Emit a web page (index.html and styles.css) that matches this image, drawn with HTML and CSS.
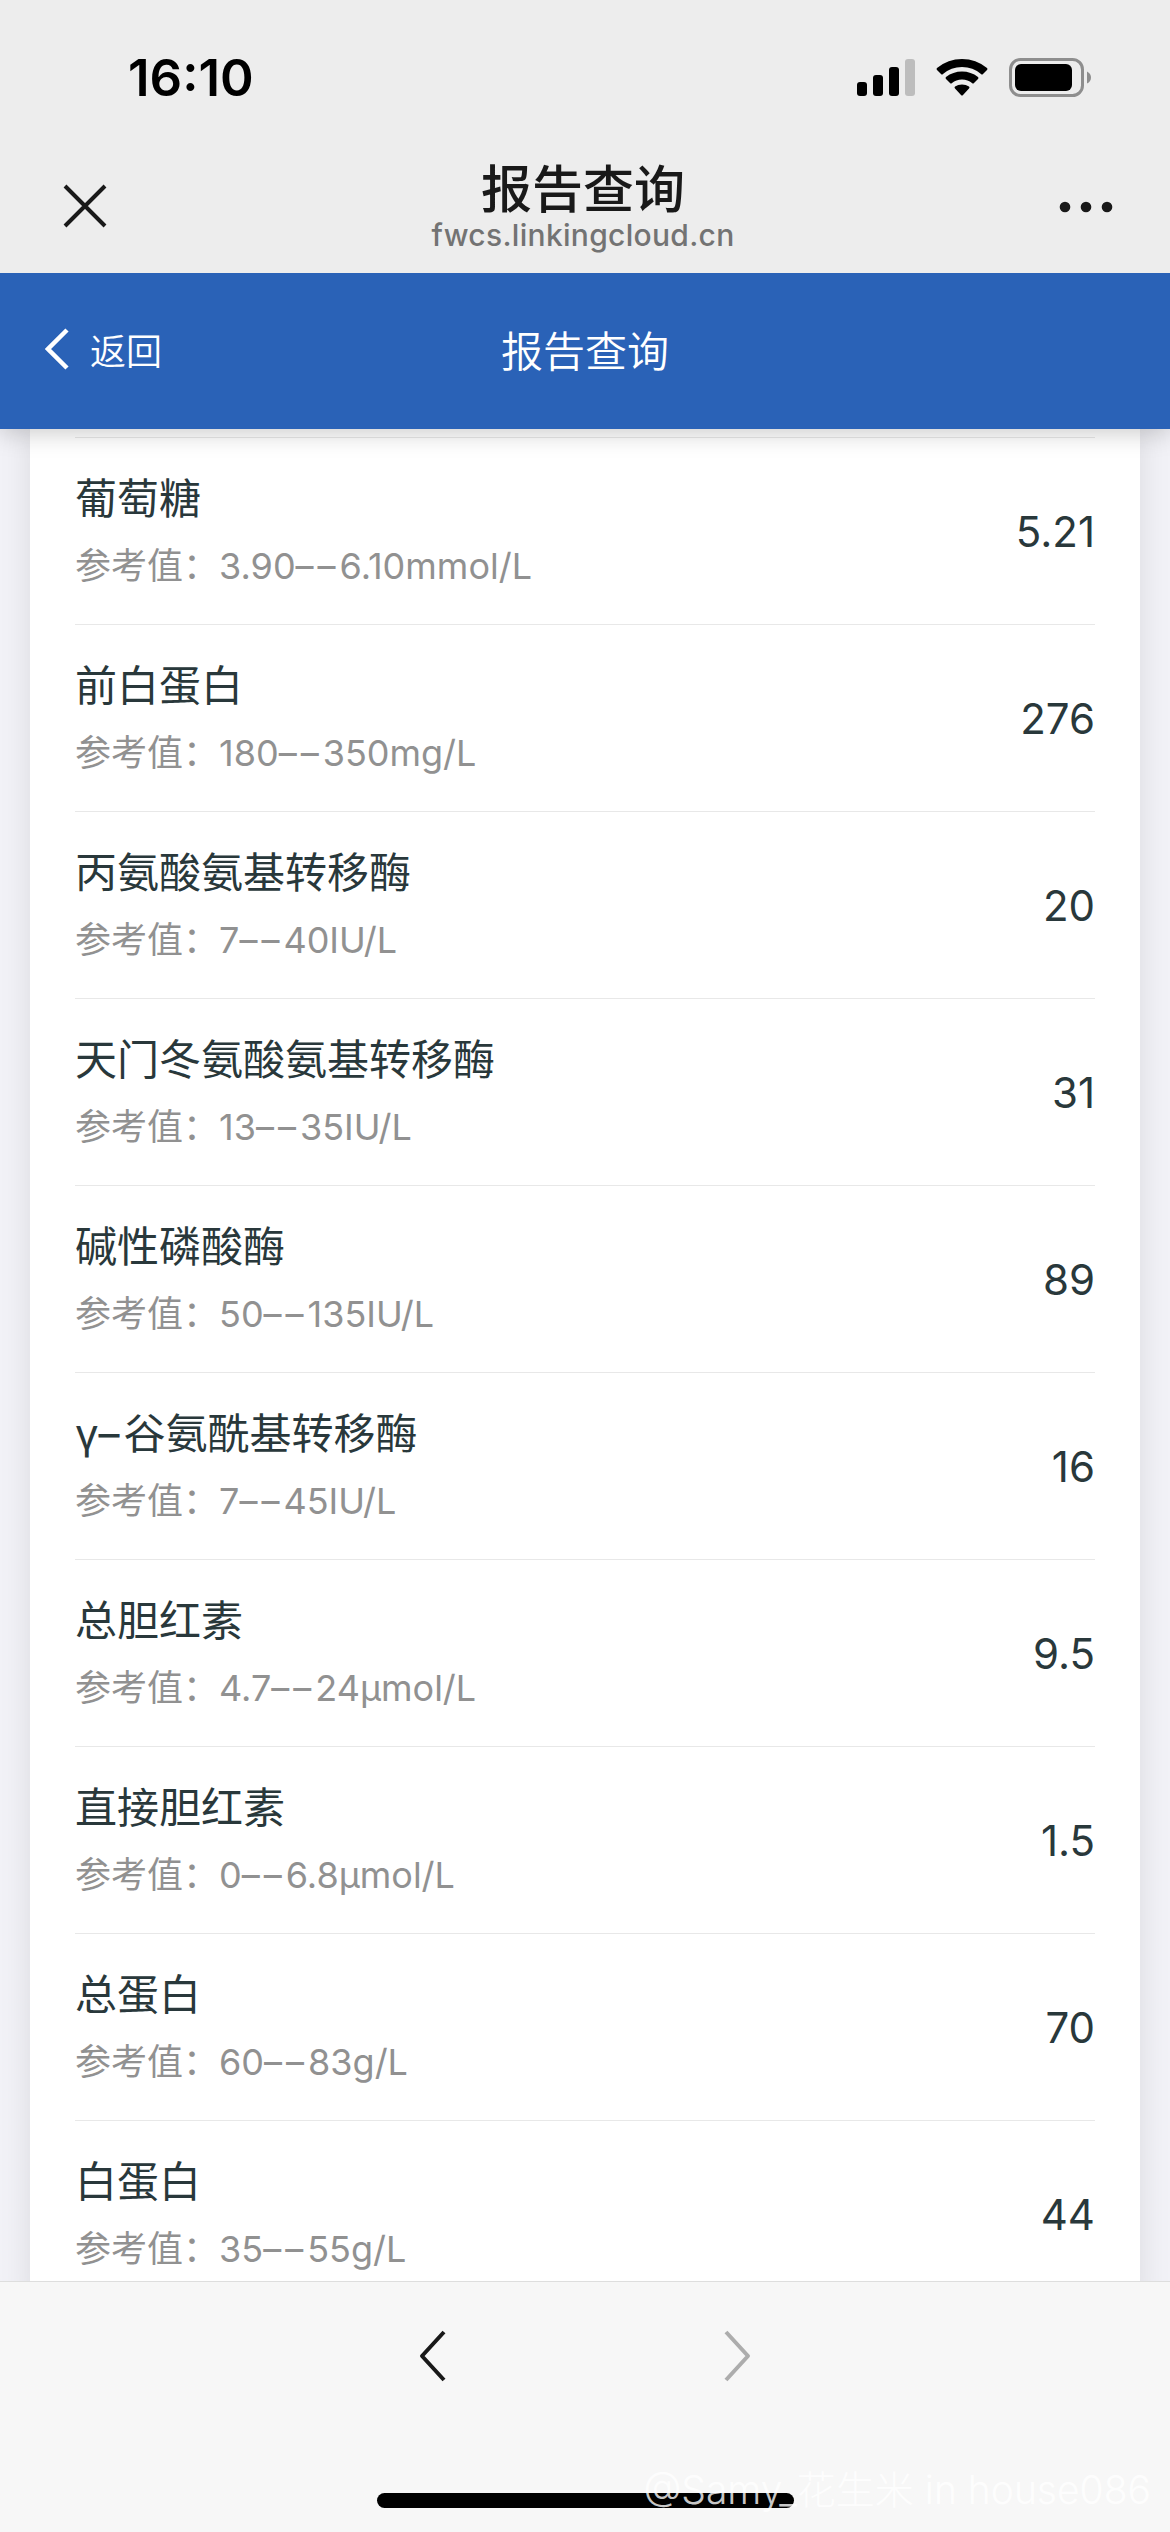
FILE: index.html
```html
<!DOCTYPE html>
<html lang="zh-CN">
<head>
    <meta charset="UTF-8">
    <meta name="viewport" content="width=device-width, initial-scale=1.0">
    <title>报告查询</title>
    <link rel="stylesheet" href="styles.css">
</head>
<body>
    <div class="status-bar">
        <div class="time">16:10</div>
        <div class="status-icons">
            <svg class="signal" width="60" height="42" viewBox="0 0 60 42">
                <rect x="1" y="25" width="10" height="14" rx="3"/>
                <rect x="17" y="18" width="10" height="21" rx="3"/>
                <rect x="33" y="10" width="10" height="29" rx="3"/>
                <rect x="49" y="2" width="10" height="37" rx="3" fill="#bdbdbd"/>
            </svg>
            <svg class="wifi" width="52" height="42" viewBox="0 0 52 42">
                <path d="M1 13 Q0 12 1 11 Q12 2 26 2 Q40 2 51 11 Q52 12 51 13 L47 17 Q46 18 45 17 Q37 10 26 10 Q15 10 7 17 Q6 18 5 17Z"/>
                <path d="M10 22 Q9 21 10 20 Q17 14.500 26 14.500 Q35 14.500 42 20 Q43 21 42 22 L38 26 Q37 27 36 26 Q32 22.500 26 22.500 Q20 22.500 16 26 Q15 27 14 26Z"/>
                <path d="M19 31.500 Q18 30.500 19 29.500 Q22 27.500 26 27.500 Q30 27.500 33 29.500 Q34 30.500 33 31.500 L27 38 Q26 39 25 38Z"/>
            </svg>
            <svg class="battery" width="84" height="42" viewBox="0 0 84 42">
                <rect x="2.500" y="2.500" width="72" height="36" rx="10" fill="none" stroke="#8e8e8e" stroke-width="3"/>
                <rect x="7" y="7" width="57" height="27" rx="6"/>
                <path d="M79 14.500 Q83 16.500 83 20.500 Q83 24.500 79 26.500Z" fill="#8e8e8e"/>
            </svg>
        </div>
    </div>

    <div class="browser-bar">
        <svg class="close" width="44" height="46" viewBox="0 0 44 46">
            <path d="M2 2 L42 42 M42 2 L2 42" fill="none" stroke="#191919" stroke-width="4"/>
        </svg>
        <div class="page-info">
            <div class="page-title">报告查询</div>
            <div class="page-url">fwcs.linkingcloud.cn</div>
        </div>
        <svg class="more" width="54" height="12" viewBox="0 0 54 12">
            <circle cx="6" cy="6" r="5.300"/>
            <circle cx="27" cy="6" r="5.300"/>
            <circle cx="48" cy="6" r="5.300"/>
        </svg>
    </div>

    <div class="header">
        <div class="back">
            <svg width="24" height="42" viewBox="0 0 24 42">
                <path d="M22 2 L3 21 L22 40" fill="none" stroke="#fff" stroke-width="4.500"/>
            </svg>
            <span>返回</span>
        </div>
        <div class="header-title">报告查询</div>
    </div>

    <div class="content">
        <div class="card">
            <div class="item">
                <div>
                    <div class="name">葡萄糖</div>
                    <div class="range">参考值：3.90<span class="dash">––</span>6.10mmol/L</div>
                </div>
                <div class="value">5.21</div>
            </div>
            <div class="item">
                <div>
                    <div class="name">前白蛋白</div>
                    <div class="range">参考值：180<span class="dash">––</span>350mg/L</div>
                </div>
                <div class="value">276</div>
            </div>
            <div class="item">
                <div>
                    <div class="name">丙氨酸氨基转移酶</div>
                    <div class="range">参考值：7<span class="dash">––</span>40IU/L</div>
                </div>
                <div class="value">20</div>
            </div>
            <div class="item">
                <div>
                    <div class="name">天门冬氨酸氨基转移酶</div>
                    <div class="range">参考值：13<span class="dash">––</span>35IU/L</div>
                </div>
                <div class="value">31</div>
            </div>
            <div class="item">
                <div>
                    <div class="name">碱性磷酸酶</div>
                    <div class="range">参考值：50<span class="dash">––</span>135IU/L</div>
                </div>
                <div class="value">89</div>
            </div>
            <div class="item">
                <div>
                    <div class="name">γ<span class="dash">–</span>谷氨酰基转移酶</div>
                    <div class="range">参考值：7<span class="dash">––</span>45IU/L</div>
                </div>
                <div class="value">16</div>
            </div>
            <div class="item">
                <div>
                    <div class="name">总胆红素</div>
                    <div class="range">参考值：4.7<span class="dash">––</span>24μmol/L</div>
                </div>
                <div class="value">9.5</div>
            </div>
            <div class="item">
                <div>
                    <div class="name">直接胆红素</div>
                    <div class="range">参考值：0<span class="dash">––</span>6.8μmol/L</div>
                </div>
                <div class="value">1.5</div>
            </div>
            <div class="item">
                <div>
                    <div class="name">总蛋白</div>
                    <div class="range">参考值：60<span class="dash">––</span>83g/L</div>
                </div>
                <div class="value">70</div>
            </div>
            <div class="item">
                <div>
                    <div class="name">白蛋白</div>
                    <div class="range">参考值：35<span class="dash">––</span>55g/L</div>
                </div>
                <div class="value">44</div>
            </div>
        </div>
    </div>

    <div class="toolbar">
        <svg width="28" height="52" viewBox="0 0 28 52">
            <path d="M25 2 L3 26 L25 50" fill="none" stroke="#191919" stroke-width="4" stroke-linejoin="round"/>
        </svg>
        <svg width="28" height="52" viewBox="0 0 28 52">
            <path d="M3 2 L25 26 L3 50" fill="none" stroke="#adadad" stroke-width="4" stroke-linejoin="round"/>
        </svg>
        <div class="home-indicator"></div>
        <div class="watermark">@Samy_花生米 in house086</div>
    </div>
</body>
</html>
```
FILE: styles.css
```css
* {
    box-sizing: border-box;
}
body {
    margin: 0;
    height: 2532px;
    overflow: hidden;
    display: flex;
    flex-direction: column;
    font-family: Inter, "Noto Sans CJK SC", sans-serif;
    background-color: #f2f2f7;
}
svg {
    display: block;
}
.status-bar {
    height: 141px;
    padding: 57px 78px 0 128px;
    display: flex;
    justify-content: space-between;
    background-color: #ededed;
}
.time {
    font-size: 51px;
    font-weight: 600;
    line-height: 42px;
    color: #000;
}
.status-icons {
    display: flex;
    gap: 20px;
}
.browser-bar {
    height: 132px;
    padding: 0 57px 0 63px;
    display: flex;
    justify-content: space-between;
    align-items: center;
    position: relative;
    z-index: 2;
    background-color: #ededed;
}
.page-info {
    padding-top: 2px;
    text-align: center;
}
.page-title {
    font-size: 51px;
    font-weight: 500;
    line-height: 54px;
    color: #191919;
}
.page-url {
    font-size: 30px;
    font-weight: 500;
    line-height: 36px;
    letter-spacing: 0.3px;
    color: #737373;
}
.more {
    fill: #191919;
}
.header {
    height: 156px;
    padding-bottom: 5px;
    display: grid;
    grid-template-columns: 1fr auto 1fr;
    align-items: center;
    position: relative;
    z-index: 1;
    background-color: #2a62b7;
    color: #fff;
    box-shadow: 0 3px 24px rgba(0, 0, 0, 0.22);
}
.back {
    display: flex;
    align-items: center;
    gap: 21px;
    padding-left: 45px;
    font-size: 36px;
    font-weight: 350;
}
.header-title {
    font-size: 42px;
    font-weight: 350;
}
.content {
    flex: 1;
    min-height: 0;
    overflow: hidden;
    padding: 0 30px;
}
.card {
    padding: 8px 45px 0;
    background-color: #fff;
    box-shadow: 0 0 30px rgba(0, 0, 0, 0.1);
}
.item {
    height: 187px;
    display: flex;
    justify-content: space-between;
    align-items: center;
    border-top: 1px solid #e8e8e8;
}
.name {
    font-size: 42px;
    line-height: 63px;
    color: #29383b;
}
.range {
    margin-top: 6px;
    font-size: 36px;
    line-height: 60px;
    color: #919191;
}
.dash {
    letter-spacing: 4px;
}
.value {
    font-size: 42px;
    color: #29383b;
}
.toolbar {
    height: 251px;
    padding-top: 48px;
    display: flex;
    justify-content: center;
    gap: 276px;
    position: relative;
    border-top: 1px solid #dedede;
    background-color: #f7f7f7;
}
.home-indicator {
    position: absolute;
    left: 377px;
    bottom: 24px;
    width: 417px;
    height: 15px;
    border-radius: 8px;
    background-color: #000;
}
.watermark {
    position: absolute;
    right: 19px;
    bottom: 17px;
    font-size: 39px;
    font-weight: 300;
    white-space: nowrap;
    color: rgba(255, 255, 255, 0.8);
}
```
